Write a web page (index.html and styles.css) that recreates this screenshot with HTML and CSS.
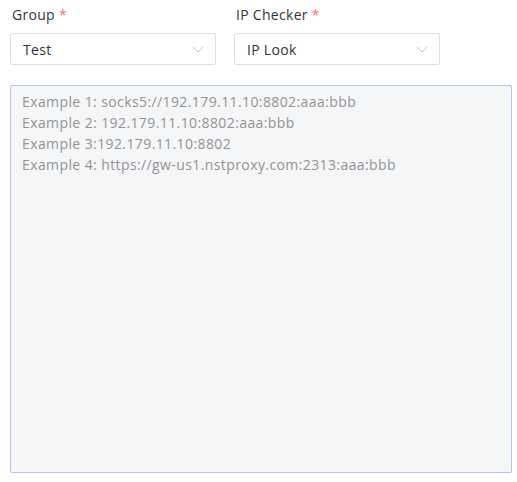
FILE: index.html
```html
<!DOCTYPE html>
<html lang="en">
<head>
    <meta charset="UTF-8">
    <meta name="viewport" content="width=device-width, initial-scale=1.0">
    <title>Import Proxies</title>
    <link rel="stylesheet" href="styles.css">
</head>
<body>
    <div class="form-row">
        <div class="field">
            <label class="field-label">Group <span class="required">*</span></label>
            <div class="select">
                <span class="select-value">Test</span>
                <svg class="chevron" width="12" height="7" viewBox="0 0 12 7"><path d="M1 1 L6 6 L11 1" fill="none" stroke="#c0c4cc" stroke-width="1"/></svg>
            </div>
        </div>
        <div class="field">
            <label class="field-label">IP Checker <span class="required">*</span></label>
            <div class="select">
                <span class="select-value">IP Look</span>
                <svg class="chevron" width="12" height="7" viewBox="0 0 12 7"><path d="M1 1 L6 6 L11 1" fill="none" stroke="#c0c4cc" stroke-width="1"/></svg>
            </div>
        </div>
    </div>
    <textarea class="proxy-input" placeholder="Example 1: socks5://192.179.11.10:8802:aaa:bbb&#10;Example 2: 192.179.11.10:8802:aaa:bbb&#10;Example 3:192.179.11.10:8802&#10;Example 4: https://gw-us1.nstproxy.com:2313:aaa:bbb"></textarea>
</body>
</html>
```

FILE: styles.css
```css
body {
    margin: 0;
    padding: 5px 5px 0 10px;
    font-family: "Open Sans", sans-serif;
    font-size: 14px;
    letter-spacing: 0.3px;
    color: #333;
    background: #fff;
}
.form-row {
    display: flex;
    gap: 18px;
}
.field {
    width: 206px;
}
.field-label {
    display: block;
    padding-left: 2px;
    line-height: 20px;
    margin-bottom: 8px;
    color: #333;
}
.required {
    color: #f56c6c;
}
.select {
    display: flex;
    align-items: center;
    justify-content: space-between;
    height: 32px;
    box-sizing: border-box;
    padding: 0 11px 0 12px;
    border: 1px solid #dcdfe6;
    border-radius: 2px;
    background: #fff;
}
.select-value {
    color: #333;
}
.chevron {
    display: block;
}
.proxy-input {
    display: block;
    width: 502px;
    height: 388px;
    box-sizing: border-box;
    margin-top: 20px;
    padding: 5px 11px;
    border: 1px solid #b9c0ee;
    border-radius: 2px;
    background: #f5f6f8;
    font-family: inherit;
    font-size: 14px;
    letter-spacing: 0.4px;
    line-height: 21px;
    resize: none;
    outline: none;
}
.proxy-input::placeholder {
    color: #939393;
}
```
